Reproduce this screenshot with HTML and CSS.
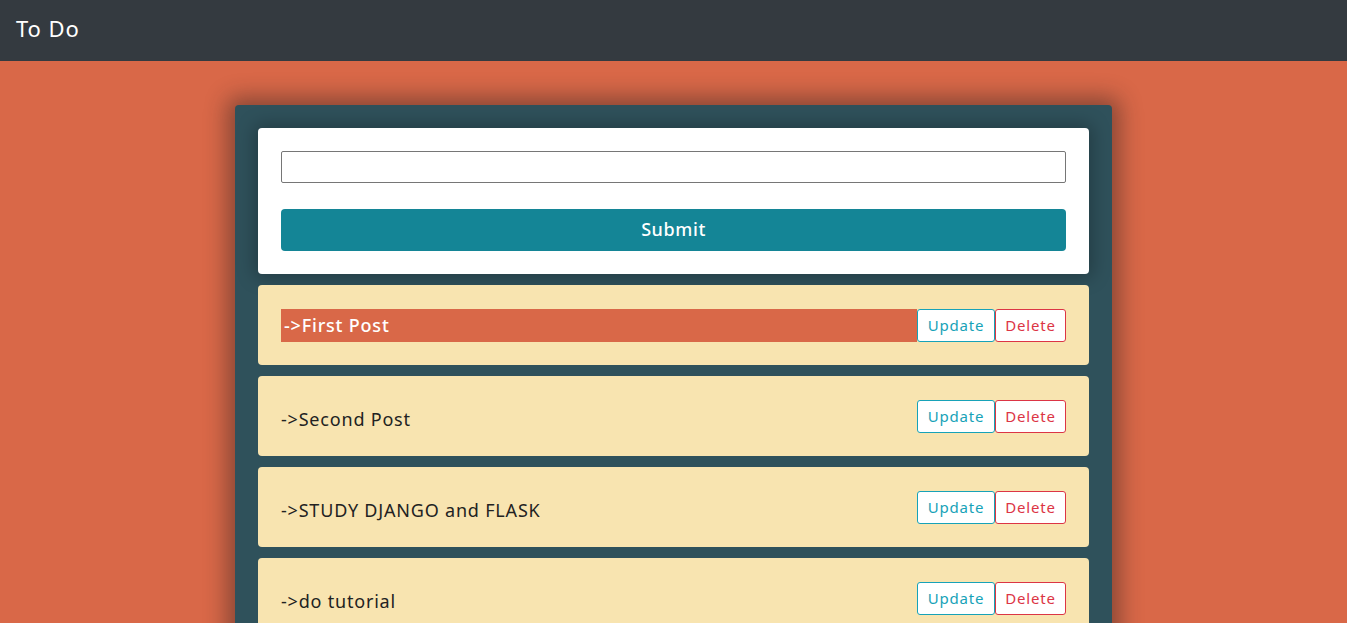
FILE: index.html
```html
<!DOCTYPE html>
<html>
<head>
<meta charset="utf-8">
<title>To Do</title>
<link rel="stylesheet" href="styles.css">
</head>
<body>
<nav class="navbar"><span class="brand">To Do</span></nav>
<main class="page">
  <div class="board">
    <form class="form-card">
      <input class="text-input" type="text">
      <button class="submit-btn" type="button">Submit</button>
    </form>
    <div class="item">
      <div class="item-title item-title--active">-&gt;First Post</div>
      <div class="actions"><button class="btn btn-update">Update</button><button class="btn btn-delete">Delete</button></div>
    </div>
    <div class="item">
      <div class="item-title">-&gt;Second Post</div>
      <div class="actions"><button class="btn btn-update">Update</button><button class="btn btn-delete">Delete</button></div>
    </div>
    <div class="item">
      <div class="item-title">-&gt;STUDY DJANGO and FLASK</div>
      <div class="actions"><button class="btn btn-update">Update</button><button class="btn btn-delete">Delete</button></div>
    </div>
    <div class="item">
      <div class="item-title">-&gt;do tutorial</div>
      <div class="actions"><button class="btn btn-update">Update</button><button class="btn btn-delete">Delete</button></div>
    </div>
  </div>
</main>
</body>
</html>
```
FILE: styles.css
```css
* { box-sizing: border-box; }
html, body { margin: 0; height: 100%; overflow: hidden; }
body {
  font-family: "Noto Sans", "Open Sans", sans-serif;
  background: #d96848;
  color: #222;
}
.navbar {
  height: 61px;
  background: #343a40;
  display: flex;
  align-items: center;
  padding: 0 16px 5px;
}
.brand { color: #fff; font-size: 22px; letter-spacing: 0.9px; }
.page { padding-top: 44px; }
.board {
  width: 877px;
  margin: 0 auto;
  background: #2f515b;
  border-radius: 4px;
  padding: 23px;
  display: flex;
  flex-direction: column;
  gap: 11px;
  box-shadow: 0 0 22px 8px rgba(40, 30, 30, 0.45);
}
.form-card {
  background: #fff;
  border-radius: 4px;
  padding: 23px;
  display: flex;
  flex-direction: column;
  margin: 0;
  box-shadow: 0 0 18px 4px rgba(0,0,0,0.25);
}
.text-input {
  height: 32px;
  border: 1px solid #767676;
  border-radius: 2px;
  margin-bottom: 26px;
  font: inherit;
}
.submit-btn {
  height: 42px;
  background: #148596;
  color: #fff;
  border: none;
  border-radius: 4px;
  font-family: inherit;
  font-size: 18px;
  font-weight: 500;
  letter-spacing: 0.6px;
  padding: 0 0 2px;
}
.item {
  background: #f8e4b0;
  border-radius: 4px;
  height: 80px;
  padding: 0 23px;
  display: flex;
  align-items: center;
}
.item-title {
  flex: 1;
  font-size: 18px;
  letter-spacing: 0.8px;
  padding-top: 6px;
  color: #222;
}
.item-title--active {
  background: #d96848;
  color: #fff;
  font-weight: 500;
  height: 33px;
  line-height: 33px;
  padding: 0 3px;
}
.actions { display: flex; }
.btn {
  height: 33px;
  background: #fff;
  border-radius: 3px;
  font-family: inherit;
  font-size: 15px;
  letter-spacing: 0.8px;
  padding: 0;
}
.btn-update { border: 1px solid #17a2b8; color: #17a2b8; width: 78px; }
.btn-delete { border: 1px solid #dc3545; color: #dc3545; width: 71px; }
```
